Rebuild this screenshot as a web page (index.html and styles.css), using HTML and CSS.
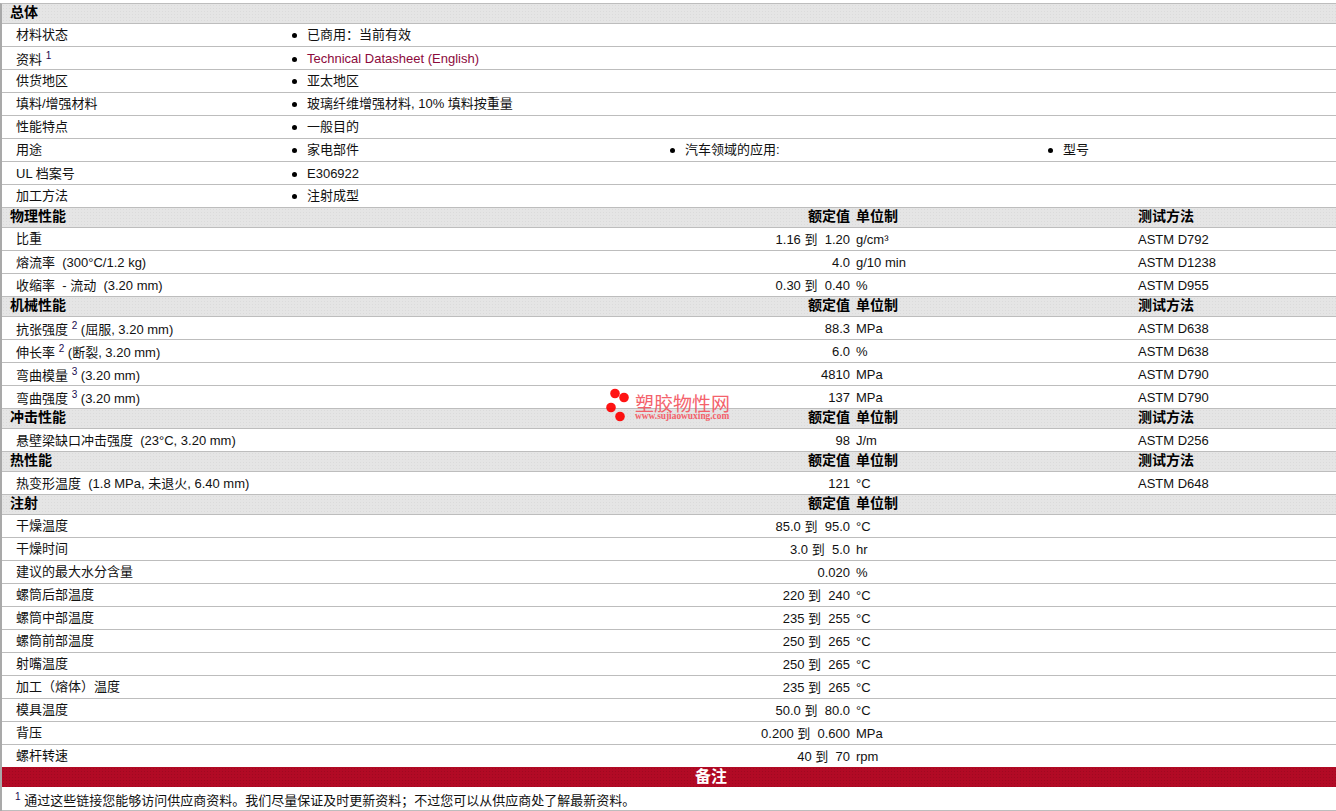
FILE: index.html
```html
<!DOCTYPE html>
<html lang="zh">
<head>
<meta charset="utf-8">
<title>塑胶物性</title>
<link rel="stylesheet" href="styles.css">
</head>
<body>
<main class="sheet">
  <div class="head"><b class="head-title">总体</b></div>
  <div class="info"><span class="label">材料状态</span><span class="item">已商用：当前有效</span></div>
  <div class="info"><span class="label low">资料 <sup>1</sup></span><span class="item low"><a class="link" href="#">Technical Datasheet (English)</a></span></div>
  <div class="info"><span class="label">供货地区</span><span class="item">亚太地区</span></div>
  <div class="info"><span class="label">填料/增强材料</span><span class="item">玻璃纤维增强材料, 10% 填料按重量</span></div>
  <div class="info"><span class="label">性能特点</span><span class="item">一般目的</span></div>
  <div class="info"><span class="label">用途</span><span class="item">家电部件</span><span class="item">汽车领域的应用:</span><span class="item">型号</span></div>
  <div class="info"><span class="label low">UL 档案号</span><span class="item low">E306922</span></div>
  <div class="info"><span class="label">加工方法</span><span class="item">注射成型</span></div>

  <div class="head spec"><b class="head-title">物理性能</b><b class="value">额定值</b><b>单位制</b><b>测试方法</b></div>
  <div class="row spec"><span class="label">比重</span><span class="value">1.16 到&nbsp; 1.20</span><span>g/cm³</span><span>ASTM D792</span></div>
  <div class="row spec"><span class="label low">熔流率&nbsp; (300°C/1.2 kg)</span><span class="value">4.0</span><span>g/10 min</span><span>ASTM D1238</span></div>
  <div class="row spec"><span class="label low">收缩率&nbsp; - 流动&nbsp; (3.20 mm)</span><span class="value">0.30 到&nbsp; 0.40</span><span>%</span><span>ASTM D955</span></div>

  <div class="head spec"><b class="head-title">机械性能</b><b class="value">额定值</b><b>单位制</b><b>测试方法</b></div>
  <div class="row spec"><span class="label low">抗张强度 <sup>2</sup> (屈服, 3.20 mm)</span><span class="value">88.3</span><span>MPa</span><span>ASTM D638</span></div>
  <div class="row spec"><span class="label low">伸长率 <sup>2</sup> (断裂, 3.20 mm)</span><span class="value">6.0</span><span>%</span><span>ASTM D638</span></div>
  <div class="row spec"><span class="label low">弯曲模量 <sup>3</sup> (3.20 mm)</span><span class="value">4810</span><span>MPa</span><span>ASTM D790</span></div>
  <div class="row spec"><span class="label low">弯曲强度 <sup>3</sup> (3.20 mm)</span><span class="value">137</span><span>MPa</span><span>ASTM D790</span></div>

  <div class="head spec"><b class="head-title">冲击性能</b><b class="value">额定值</b><b>单位制</b><b>测试方法</b></div>
  <div class="row spec"><span class="label low">悬壁梁缺口冲击强度&nbsp; (23°C, 3.20 mm)</span><span class="value">98</span><span>J/m</span><span>ASTM D256</span></div>

  <div class="head spec"><b class="head-title">热性能</b><b class="value">额定值</b><b>单位制</b><b>测试方法</b></div>
  <div class="row spec"><span class="label low">热变形温度&nbsp; (1.8 MPa, 未退火, 6.40 mm)</span><span class="value">121</span><span>°C</span><span>ASTM D648</span></div>

  <div class="head spec"><b class="head-title">注射</b><b class="value">额定值</b><b>单位制</b></div>
  <div class="row spec"><span class="label">干燥温度</span><span class="value">85.0 到&nbsp; 95.0</span><span>°C</span></div>
  <div class="row spec"><span class="label">干燥时间</span><span class="value">3.0 到&nbsp; 5.0</span><span>hr</span></div>
  <div class="row spec"><span class="label">建议的最大水分含量</span><span class="value">0.020</span><span>%</span></div>
  <div class="row spec"><span class="label">螺筒后部温度</span><span class="value">220 到&nbsp; 240</span><span>°C</span></div>
  <div class="row spec"><span class="label">螺筒中部温度</span><span class="value">235 到&nbsp; 255</span><span>°C</span></div>
  <div class="row spec"><span class="label">螺筒前部温度</span><span class="value">250 到&nbsp; 265</span><span>°C</span></div>
  <div class="row spec"><span class="label">射嘴温度</span><span class="value">250 到&nbsp; 265</span><span>°C</span></div>
  <div class="row spec"><span class="label">加工（熔体）温度</span><span class="value">235 到&nbsp; 265</span><span>°C</span></div>
  <div class="row spec"><span class="label">模具温度</span><span class="value">50.0 到&nbsp; 80.0</span><span>°C</span></div>
  <div class="row spec"><span class="label">背压</span><span class="value">0.200 到&nbsp; 0.600</span><span>MPa</span></div>
  <div class="row spec last"><span class="label">螺杆转速</span><span class="value">40 到&nbsp; 70</span><span>rpm</span></div>

  <h2 class="notes-title">备注</h2>
  <p class="note"><sup>1</sup> 通过这些链接您能够访问供应商资料。我们尽量保证及时更新资料；不过您可以从供应商处了解最新资料。</p>
</main>

<div class="mark">
  <svg class="mark-dots" width="28" height="34" viewBox="0 0 28 34" aria-hidden="true">
    <circle cx="10" cy="5.5" r="4.8"/>
    <circle cx="19" cy="9.5" r="4.8"/>
    <circle cx="6" cy="19.5" r="4.8"/>
    <circle cx="15" cy="28.5" r="4.8"/>
  </svg>
  <div class="mark-text">
    <span class="mark-name">塑胶物性网</span>
    <span class="mark-url">www.sujiaowuxing.com</span>
  </div>
</div>
</body>
</html>
```

FILE: styles.css
```css
html, body {
  margin: 0;
  padding: 0;
  background: #fff;
}

body {
  font-family: "Liberation Sans", "Noto Sans CJK SC", sans-serif;
  font-size: 13px;
  line-height: 16px;
  color: #111;
  overflow: hidden;
}

.sheet {
  margin-top: 3px;
  border-left: 2px solid #a9a9a9;
  border-top: 1px solid #bdbdbd;
}

.head,
.row,
.info {
  box-sizing: border-box;
  display: grid;
  align-items: center;
  border-bottom: 1px solid #bdbdbd;
  white-space: nowrap;
}

.head {
  height: 20px;
  padding-bottom: 3px;
  background: radial-gradient(#dbdbdb 0.5px, transparent 0.8px) 0 0 / 3px 3px, #e5e5e5;
  color: #000;
}

.head b {
  font-size: 14px;
  font-weight: 700;
}

.row,
.info {
  height: 23px;
}

.row.last {
  height: 22px;
  border-bottom: 0;
}

.info {
  grid-template-columns: 289px 378px 378px 1fr;
}

.spec {
  grid-template-columns: 600px 248px 282px 1fr;
}

.spec > :nth-child(3),
.spec > :nth-child(4) {
  padding-left: 6px;
}

.row > :not(.label),
.low {
  padding-top: 2px;
}

.head-title {
  padding-left: 8px;
}

.label {
  padding-left: 14px;
}

.value {
  text-align: right;
}

.item {
  display: flex;
  align-items: center;
  gap: 10px;
  padding-left: 1px;
}

.item::before {
  content: "";
  width: 5px;
  height: 5px;
  border-radius: 50%;
  background: #000;
}

.link {
  color: #8c0a3c;
  text-decoration: none;
}

sup {
  font-size: 10px;
  line-height: 12px;
  color: #1a0a50;
}

.notes-title {
  margin: 0;
  height: 20px;
  background: radial-gradient(#a00820 0.5px, transparent 0.8px) 0 0 / 3px 3px, #b20a25;
  color: #fff;
  font-size: 16px;
  font-weight: 700;
  line-height: 20px;
  text-align: center;
  padding-left: 84px;
}

.note {
  box-sizing: border-box;
  margin: 0;
  height: 24px;
  line-height: 28px;
  padding-left: 13px;
  border-bottom: 1px solid #bdbdbd;
  white-space: nowrap;
}

.note sup {
  line-height: 0;
}

.mark {
  position: absolute;
  left: 605px;
  top: 388px;
  display: flex;
  gap: 2px;
  opacity: 0.92;
}

.mark-dots {
  fill: #f00;
  flex: none;
}

.mark-text {
  display: flex;
  flex-direction: column;
  margin-top: 5px;
}

.mark-name {
  font-family: "Noto Sans CJK SC", sans-serif;
  font-weight: 400;
  font-size: 19px;
  line-height: 19px;
  color: #f4555f;
  white-space: nowrap;
}

.mark-url {
  font-family: "Liberation Serif", serif;
  font-weight: 700;
  font-size: 9.4px;
  line-height: 9px;
  color: #f4555f;
  white-space: nowrap;
}
```
